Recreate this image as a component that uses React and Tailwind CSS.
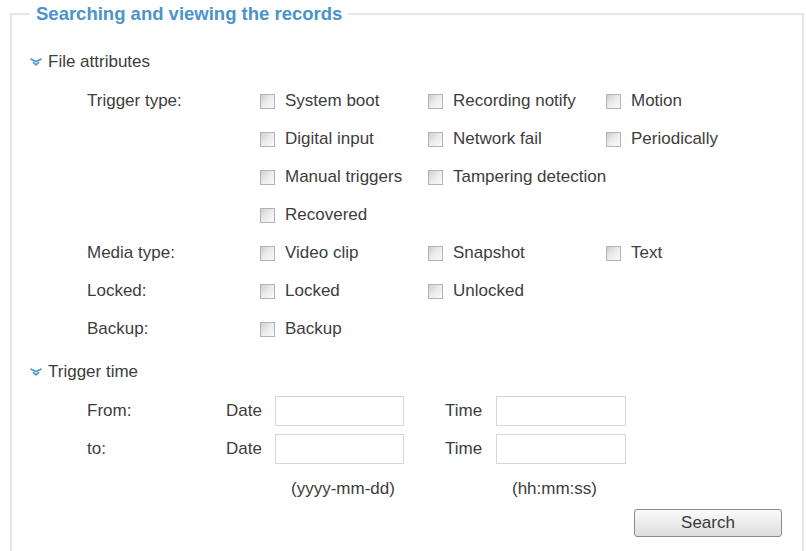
import React from 'react';

const triggerRows = [
  ['System boot', 'Recording notify', 'Motion'],
  ['Digital input', 'Network fail', 'Periodically'],
  ['Manual triggers', 'Tampering detection'],
  ['Recovered'],
];

function Box() {
  return (
    <input
      type="checkbox"
      className="appearance-none w-[15px] h-[15px] border border-[#b3b3b3] bg-gradient-to-br from-[#cfcfcf] via-[#ececec] to-[#fafafa] shrink-0 m-0"
    />
  );
}

function Check({ label, width }) {
  return (
    <label className={`flex items-center gap-[10px] whitespace-nowrap shrink-0 ${width}`}>
      <Box />
      <span>{label}</span>
    </label>
  );
}

function Row({ label, items }) {
  const widths = ['w-[168px]', 'w-[178px]', 'w-[150px]'];
  return (
    <div className="flex items-center h-[38px]">
      <div className="w-[173px] shrink-0">{label}</div>
      {items.map((it, i) => (
        <Check key={it} label={it} width={widths[i]} />
      ))}
    </div>
  );
}

function Chevrons() {
  return (
    <svg width="12" height="8" viewBox="0 0 12 8" fill="none" stroke="#4a9ad2" strokeWidth="1.7" strokeLinecap="round" strokeLinejoin="round">
      <polyline points="1,1.2 6,3.6 11,1.2" />
      <polyline points="3.5,4.6 6,6.8 8.5,4.6" />
    </svg>
  );
}

function Section({ title }) {
  return (
    <div className="flex items-center h-[24px] pl-[18px] gap-[6px]">
      <Chevrons />
      <span>{title}</span>
    </div>
  );
}

export default function App() {
  return (
    <div className="w-[806px] h-[551px] bg-white overflow-hidden pl-[10px] pr-[2px] text-[17px] text-[#3d3d3d] font-['Liberation_Sans',Arial,sans-serif]">
      <fieldset className="mt-[4px] h-[580px] border-2 border-[#e6e6e6]">
        <legend className="ml-[18px] px-[6px] h-[20px] leading-[20px] font-bold text-[18.5px] text-[#4b93ca]">
          Searching and viewing the records
        </legend>

        <div className="pt-[26px]">
          <Section title="File attributes" />

          <div className="mt-[8px] pl-[75px]">
            {triggerRows.map((r, i) => (
              <Row key={i} label={i === 0 ? 'Trigger type:' : ''} items={r} />
            ))}
            <Row label="Media type:" items={['Video clip', 'Snapshot', 'Text']} />
            <Row label="Locked:" items={['Locked', 'Unlocked']} />
            <Row label="Backup:" items={['Backup']} />
          </div>

          <div className="mt-[12px]">
            <Section title="Trigger time" />
          </div>

          <div className="mt-[8px] pl-[75px]">
            {['From:', 'to:'].map((l) => (
              <div key={l} className="flex items-center h-[38px]">
                <div className="w-[139px]">{l}</div>
                <div className="w-[49px]">Date</div>
                <input className="w-[129px] h-[30px] border border-[#d6d6d6] outline-none" />
                <div className="w-[51px] ml-[41px]">Time</div>
                <input className="w-[130px] h-[30px] border border-[#d6d6d6] outline-none" />
              </div>
            ))}
            <div className="flex items-center h-[24px] mt-[9px]">
              <div className="ml-[204px] w-[221px]">(yyyy-mm-dd)</div>
              <div>(hh:mm:ss)</div>
            </div>
            <div className="flex mt-[8px] pl-[547px]">
              <button className="w-[148px] h-[28px] rounded-[3px] border border-[#8c8c8c] bg-gradient-to-b from-[#fbfbfb] to-[#dedede] text-[#3a3a3a]">
                Search
              </button>
            </div>
          </div>
        </div>
      </fieldset>
    </div>
  );
}
